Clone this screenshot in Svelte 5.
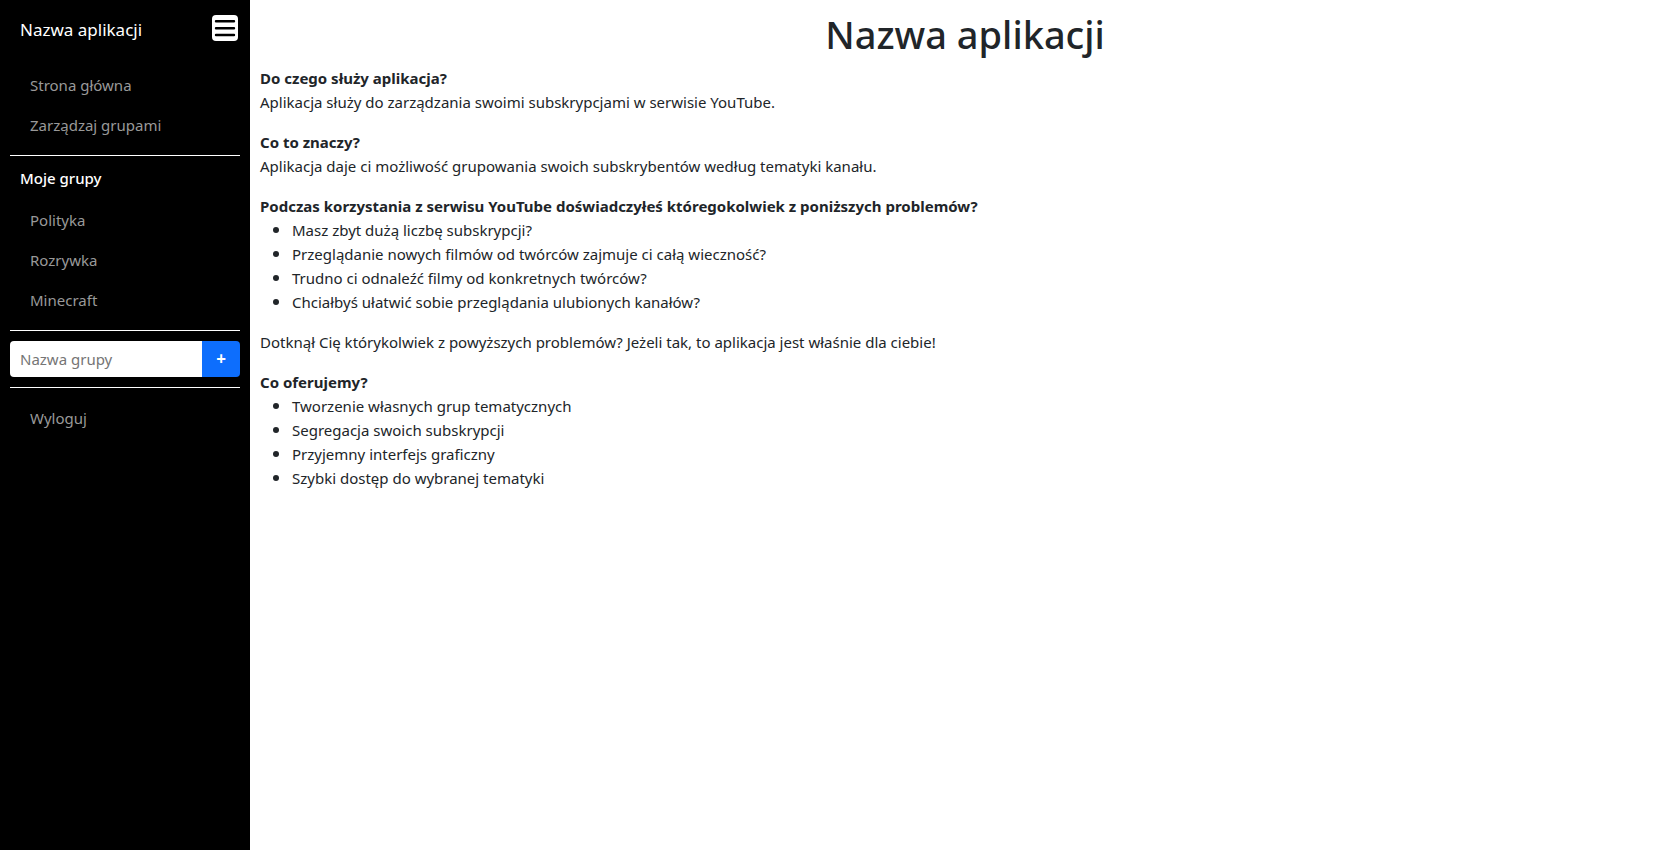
<script>
  const pages = ['Strona główna', 'Zarządzaj grupami'];
  const problems = [
    'Masz zbyt dużą liczbę subskrypcji?',
    'Przeglądanie nowych filmów od twórców zajmuje ci całą wieczność?',
    'Trudno ci odnaleźć filmy od konkretnych twórców?',
    'Chciałbyś ułatwić sobie przeglądania ulubionych kanałów?'
  ];
  const offers = [
    'Tworzenie własnych grup tematycznych',
    'Segregacja swoich subskrypcji',
    'Przyjemny interfejs graficzny',
    'Szybki dostęp do wybranej tematyki'
  ];

  let groups = $state(['Polityka', 'Rozrywka', 'Minecraft']);
  let name = $state('');
  let open = $state(true);

  function addGroup(event) {
    event.preventDefault();
    if (name.trim()) groups.push(name.trim());
    name = '';
  }
</script>

<div class="layout">
  <aside class="sidebar" class:closed={!open}>
    <div class="brand">
      <span class="title">Nazwa aplikacji</span>
      <button class="toggle" aria-label="Menu" aria-expanded={open} onclick={() => (open = !open)}>
        <svg viewBox="0 0 26 26" width="26" height="26" aria-hidden="true">
          <rect width="26" height="26" rx="4" fill="#fff" />
          <path d="M4 6.2h18M4 13.2h18M4 20h18" stroke="#000" stroke-width="2.4" stroke-linecap="round" />
        </svg>
      </button>
    </div>
    <nav>
      {#each pages as page}
        <a href="#top">{page}</a>
      {/each}
    </nav>
    <hr />
    <h2>Moje grupy</h2>
    <nav>
      {#each groups as group}
        <a href="#top">{group}</a>
      {/each}
    </nav>
    <hr />
    <form onsubmit={addGroup}>
      <input type="text" placeholder="Nazwa grupy" aria-label="Nazwa grupy" bind:value={name} />
      <button class="add" type="submit">+</button>
    </form>
    <hr />
    <nav>
      <a href="#top">Wyloguj</a>
    </nav>
  </aside>

  <main>
    <h1>Nazwa aplikacji</h1>
    <strong>Do czego służy aplikacja?</strong>
    <p>Aplikacja służy do zarządzania swoimi subskrypcjami w serwisie YouTube.</p>
    <strong>Co to znaczy?</strong>
    <p>Aplikacja daje ci możliwość grupowania swoich subskrybentów według tematyki kanału.</p>
    <strong>Podczas korzystania z serwisu YouTube doświadczyłeś któregokolwiek z poniższych problemów?</strong>
    <ul>
      {#each problems as item}
        <li>{item}</li>
      {/each}
    </ul>
    <p>Dotknął Cię którykolwiek z powyższych problemów? Jeżeli tak, to aplikacja jest właśnie dla ciebie!</p>
    <strong>Co oferujemy?</strong>
    <ul>
      {#each offers as item}
        <li>{item}</li>
      {/each}
    </ul>
  </main>
</div>

<style>
  :global(body) {
    margin: 0;
    background: #fff;
  }
  .layout {
    display: flex;
    min-height: 100vh;
    font-family: 'Segoe UI', 'Noto Sans', 'Open Sans', sans-serif;
    font-size: 15px;
    line-height: 24px;
    color: #212529;
  }
  .sidebar {
    box-sizing: border-box;
    flex: 0 0 250px;
    min-width: 0;
    padding: 10px;
    background: #000;
    color: #fff;
  }
  .closed > :not(.brand) {
    display: none;
  }
  .brand {
    display: flex;
    justify-content: space-between;
    padding: 5px 2px 0 10px;
    margin-bottom: 20px;
  }
  .title {
    font-size: 17px;
    line-height: 30px;
  }
  .toggle {
    display: block;
    width: 26px;
    height: 26px;
    padding: 0;
    border: 0;
    border-radius: 4px;
    background: none;
    cursor: pointer;
  }
  .toggle svg {
    display: block;
  }
  nav a {
    display: block;
    padding: 8px 20px;
    color: #999;
    text-decoration: none;
  }
  nav a:hover {
    color: #fff;
  }
  hr {
    height: 1px;
    margin: 10px 0;
    border: 0;
    background: #fff;
  }
  h2 {
    margin: 0;
    padding: 0 10px 10px;
    font-size: 15px;
    font-weight: 500;
    line-height: 24px;
  }
  form {
    display: flex;
    height: 36px;
  }
  input {
    flex: 1;
    min-width: 0;
    box-sizing: border-box;
    padding: 0 10px;
    border: 0;
    border-radius: 4px 0 0 4px;
    background: #fff;
    color: #212529;
    font: inherit;
  }
  input::placeholder {
    color: #757575;
    opacity: 1;
  }
  .add {
    width: 38px;
    padding: 0;
    border: 0;
    border-radius: 0 4px 4px 0;
    background: #0d6efd;
    color: #fff;
    font: inherit;
    font-size: 17px;
    font-weight: 700;
    cursor: pointer;
  }
  main {
    flex: 1;
    min-width: 0;
    padding: 10px;
  }
  h1 {
    margin: 0 0 8px;
    font-size: 38px;
    font-weight: 500;
    line-height: 48px;
    text-align: center;
  }
  strong {
    display: block;
    font-weight: 700;
  }
  p,
  ul {
    margin: 0 0 16px;
  }
  ul {
    padding-left: 32px;
  }
  li::marker {
    font-size: 17px;
  }
</style>
